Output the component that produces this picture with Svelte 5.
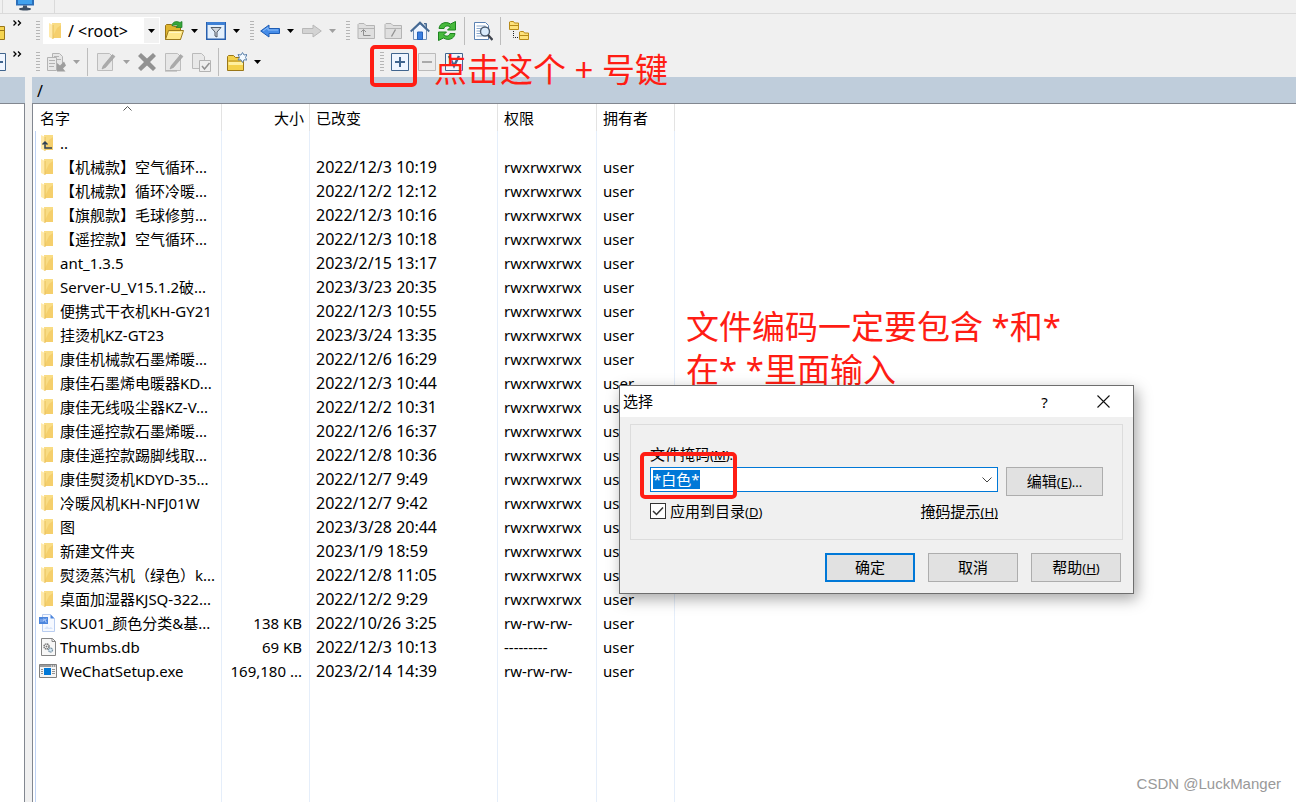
<script>
	let selectAll = $state(true);
	let mask = $state('*白色*');

	const files = [
		{ icon: 'up', name: '..', size: '', date: '', rights: '', owner: '' },
		{ icon: 'folder', name: '【机械款】空气循环...', size: '', date: '2022/12/3 10:19', rights: 'rwxrwxrwx', owner: 'user' },
		{ icon: 'folder', name: '【机械款】循环冷暖...', size: '', date: '2022/12/2 12:12', rights: 'rwxrwxrwx', owner: 'user' },
		{ icon: 'folder', name: '【旗舰款】毛球修剪...', size: '', date: '2022/12/3 10:16', rights: 'rwxrwxrwx', owner: 'user' },
		{ icon: 'folder', name: '【遥控款】空气循环...', size: '', date: '2022/12/3 10:18', rights: 'rwxrwxrwx', owner: 'user' },
		{ icon: 'folder', name: 'ant_1.3.5', size: '', date: '2023/2/15 13:17', rights: 'rwxrwxrwx', owner: 'user' },
		{ icon: 'folder', name: 'Server-U_V15.1.2破...', size: '', date: '2023/3/23 20:35', rights: 'rwxrwxrwx', owner: 'user' },
		{ icon: 'folder', name: '便携式干衣机KH-GY21', size: '', date: '2022/12/3 10:55', rights: 'rwxrwxrwx', owner: 'user' },
		{ icon: 'folder', name: '挂烫机KZ-GT23', size: '', date: '2023/3/24 13:35', rights: 'rwxrwxrwx', owner: 'user' },
		{ icon: 'folder', name: '康佳机械款石墨烯暖...', size: '', date: '2022/12/6 16:29', rights: 'rwxrwxrwx', owner: 'user' },
		{ icon: 'folder', name: '康佳石墨烯电暖器KD...', size: '', date: '2022/12/3 10:44', rights: 'rwxrwxrwx', owner: 'user' },
		{ icon: 'folder', name: '康佳无线吸尘器KZ-V...', size: '', date: '2022/12/2 10:31', rights: 'rwxrwxrwx', owner: 'user' },
		{ icon: 'folder', name: '康佳遥控款石墨烯暖...', size: '', date: '2022/12/6 16:37', rights: 'rwxrwxrwx', owner: 'user' },
		{ icon: 'folder', name: '康佳遥控款踢脚线取...', size: '', date: '2022/12/8 10:36', rights: 'rwxrwxrwx', owner: 'user' },
		{ icon: 'folder', name: '康佳熨烫机KDYD-35...', size: '', date: '2022/12/7 9:49', rights: 'rwxrwxrwx', owner: 'user' },
		{ icon: 'folder', name: '冷暖风机KH-NFJ01W', size: '', date: '2022/12/7 9:42', rights: 'rwxrwxrwx', owner: 'user' },
		{ icon: 'folder', name: '图', size: '', date: '2023/3/28 20:44', rights: 'rwxrwxrwx', owner: 'user' },
		{ icon: 'folder', name: '新建文件夹', size: '', date: '2023/1/9 18:59', rights: 'rwxrwxrwx', owner: 'user' },
		{ icon: 'folder', name: '熨烫蒸汽机（绿色）k...', size: '', date: '2022/12/8 11:05', rights: 'rwxrwxrwx', owner: 'user' },
		{ icon: 'folder', name: '桌面加湿器KJSQ-322...', size: '', date: '2022/12/2 9:29', rights: 'rwxrwxrwx', owner: 'user' },
		{ icon: 'sheet', name: 'SKU01_颜色分类&基...', size: '138 KB', date: '2022/10/26 3:25', rights: 'rw-rw-rw-', owner: 'user' },
		{ icon: 'db', name: 'Thumbs.db', size: '69 KB', date: '2022/12/3 10:13', rights: '---------', owner: 'user' },
		{ icon: 'exe', name: 'WeChatSetup.exe', size: '169,180 ...', date: '2023/2/14 14:39', rights: 'rw-rw-rw-', owner: 'user' }
	];
</script>

{#snippet fileIcon(name)}
	<svg class="file-icon" width="18" height="18" viewBox="0 0 18 18" aria-hidden="true">
		{#if name === 'folder' || name === 'up'}
			<path d="M5 1h9v15H5z" fill="#f9dc84" />
			<path d="M10 6l4-3v13H5z" fill="#f5cf6c" />
			<path d="M2 1l4 2v14l-4-2z" fill="#ffe9a9" />
			<path d="M6 3v14" stroke="#e7bf59" />
			{#if name === 'up'}
				<path d="M6 9v5h7M3.500 10.500L6 8l2.500 2.500" fill="none" stroke="#2f4156" stroke-width="1.500" />
			{/if}
		{:else if name === 'sheet'}
			<path d="M3.500.500h8l4 4v13h-12z" fill="#f6f9ff" stroke="#b9cdf0" />
			<path d="M11.500.500v4h4z" fill="#4c86dd" />
			<path d="M0 3h9v7H0z" fill="#4c86dd" />
			<path d="M2 5v3M4 8V5h1.500v1.500H4M8 5H6.500v3H8" fill="none" stroke="#bcd4ff" stroke-width=".7" />
			<path d="M5 15l3-3 2 2 2-1 2 2z" fill="#d9e5fa" />
		{:else if name === 'db'}
			<path d="M2.500.500h11l3 3v14h-14z" fill="#f7f7f7" stroke="#858585" />
			<path d="M13 .5v3h3.500" fill="none" stroke="#858585" />
			<circle cx="7.500" cy="8.500" r="2.500" fill="#fff" stroke="#777" stroke-width="1.500" stroke-dasharray="1.500 .5" />
			<circle cx="7.500" cy="8.500" r="1" fill="#777" />
			<circle cx="11.500" cy="12" r="2" fill="#d6e8f4" stroke="#7893a4" stroke-width="1.300" stroke-dasharray="1.300 .5" />
		{:else}
			<path d="M.500 2.500h17v13H.500z" fill="#f4f4f4" stroke="#808080" />
			<path d="M1 3h16v2H1z" fill="#9b9b9b" />
			<path d="M12 4h1M14 4h1M16 4h1" stroke="#fff" />
			<path d="M5 6h7v7H5z" fill="#0078d7" />
			<path d="M2 7.500h2M2 9.500h2M2 11.500h2M13 7.500h3M13 9.500h3M13 11.500h3" stroke="#929292" />
		{/if}
	</svg>
{/snippet}

{#snippet tool(name, label, disabled = false)}
	<button class="tool" aria-label={label} {disabled}>
		<svg width="20" height="20" viewBox="0 0 20 20" fill="none" aria-hidden="true">
			{#if name === 'open'}
				<path d="M1.500 18.500V4.500l1-1h5l2 2h7v13z" fill="#e0b52e" stroke="#96741a" />
				<path d="M1.500 18.500l3-9h15l-3 9z" fill="#ffe88a" stroke="#9c7b1f" />
				<path d="M5 11.500h12" stroke="#fff6c5" />
				<path d="M8 5c0-4 4-5.500 8-3.500l2-1v6h-6l2-2c-2-1-4-.5-6 .5z" fill="#37a63a" stroke="#197a24" stroke-width=".7" />
			{:else if name === 'filter'}
				<path d="M.750 1.750h18.500v16.500H.750z" fill="#e4f0fc" stroke="#2860ae" stroke-width="1.500" />
				<path d="M1 1h18v3H1z" fill="#3e80d4" />
				<path d="M5 6.500h10l-4 4.500v5l-2-1v-4z" fill="#d1d6dc" stroke="#505b68" />
			{:else if name === 'back'}
				<path d="M.700 10L9 4v3.500h10.500v5H9V16z" fill="#458ce8" stroke="#1e5cb3" />
				<path d="M3 10l5-3.500V9h10" stroke="#8bbcf8" />
			{:else if name === 'forward'}
				<path d="M19.300 10L11 4v3.500H.500v5H11V16z" fill="#d3d3d3" stroke="#b8b8b8" />
			{:else if name === 'parent' || name === 'root'}
				<path d="M2 17.500V3.500l1-1h5l2 2h8.500v13z" fill="#dfdfdf" stroke="#b4b4b4" />
				<path d="M2.500 7.500h15.500" stroke="#b4b4b4" />
				{#if name === 'parent'}
					<path d="M7.500 9v5.500h7M5 11l2.500-2.500L10 11" stroke="#8f8f8f" />
				{:else}
					<path d="M12.500 8.500l-4 7" stroke="#8f8f8f" stroke-width="1.300" />
				{/if}
			{:else if name === 'home'}
				<path d="M3.500 9v9.500h13V9L10 3z" fill="#eef5ff" stroke="#6f8eb4" />
				<path d="M14 2.500h2.500V7" fill="#7596ba" stroke="#49698f" />
				<path d="M.700 10.500L10 1.500l9.300 9" stroke="#446892" stroke-width="1.800" />
				<path d="M7.500 11h5v7.500h-5z" fill="#3a7ee0" stroke="#2360b8" />
			{:else if name === 'refresh'}
				<path d="M2 7.500C2.500 2 9 0 13.500 3L18.500.500v8.500h-8l3-3C10 4 8 5 7 7.500z" fill="#48ba3d" stroke="#1e8420" />
				<path d="M18 12.500c-.5 5.500-7 7.500-11.500 4.500l-5 2.500V11h8l-3 3c3.500 2 5.500 1 6.500-1.500z" fill="#48ba3d" stroke="#1e8420" />
			{:else if name === 'find'}
				<path d="M1.500 1.500h11l3 3v14h-14z" fill="#fff" stroke="#5b82b3" />
				<path d="M3.500 5h9M3.500 7.500h9M3.500 10h5M3.500 12.500h4M3.500 15h6" stroke="#8ba9cd" />
				<circle cx="12" cy="10.500" r="4.500" fill="#d9ebfc" stroke="#4b5c70" stroke-width="1.400" />
				<path d="M15 14l4.500 5" stroke="#40454e" stroke-width="2.400" />
			{:else if name === 'tree'}
				<path d="M.500 8.500V1l1-.5h3l1 1.500h4v6.500zM10.500 18.500V11l1-.5h3l1 1.500h4v6.500z" fill="#ffe27a" stroke="#b88b19" />
				<path d="M1 4.500h8.500M11 14.500h8.500" stroke="#b88b19" />
				<path d="M4.500 10v6.500H10" stroke="#222" stroke-dasharray="1 1" />
			{:else if name === 'copy'}
				<path d="M6.500 1.500h7l3 3v12h-10z" fill="#e6e6e6" stroke="#b3b3b3" />
				<path d="M1.500 5.500h9v13h-9z" fill="#e9e9e9" stroke="#b3b3b3" />
				<path d="M8 4.500h5M11 7.500h4M3 8.500h6M3 11.500h6M3 14.500h5" stroke="#b3b3b3" />
				<path d="M18 9.500l-4 4-3-2.500v8.500h8.500l-2.500-3 3-3z" fill="#9e9e9e" />
			{:else if name === 'edit' || name === 'rename'}
				<path d="M1.500 1.500h12l3 3v14h-15z" fill="#e7e7e7" stroke="#bdbdbd" />
				<path d="M7 14L16.500 2.500l2.500 2L9.500 15.500 6 17z" fill="#aaa" stroke="#999" stroke-width=".5" />
				{#if name === 'rename'}
					<path d="M1 19h12" stroke="#aaa" />
				{/if}
			{:else if name === 'delete'}
				<path d="M4 1l6 5.500L16 1l3 3-6 6 6 6-3 3-6-5.500L4 19l-3-3 6-6-6-6z" fill="#929292" />
			{:else if name === 'properties'}
				<path d="M1.500 1.500h9l3 3v12h-12z" fill="#e8e8e8" stroke="#bababa" />
				<path d="M8.500 8.500h11v11h-11z" fill="#eee" stroke="#b3b3b3" />
				<path d="M11 14l2.500 3 5-6" stroke="#919191" stroke-width="1.500" />
			{:else if name === 'new'}
				<path d="M.500 18.500V4.500l1-1h5l2 2h8v13z" fill="#f4d14b" stroke="#9a7718" />
				<path d="M1.500 9h14.500" stroke="#b18c25" />
				<path d="M1.500 10h14.500v3h-14.500z" fill="#fff0a0" />
				<path d="M15.500.500l1.500 2.500 3-.5-1.500 3 1.500 2.500-3-.2-1.500 2.700L14 7.800l-3 .2 1.500-2.500-1.500-3 3 .5z" fill="#f4faff" stroke="#5d82ac" />
			{:else}
				<path d="M1.500 1.500h17v17h-17z" fill={disabled ? '#ececec' : '#f0f6ff'} stroke={disabled ? '#bbb' : '#41658e'} />
				{#if name === 'plus'}
					<path d="M10 5v10M5 10h10" stroke="#41658e" stroke-width="2" />
				{:else if name === 'minus'}
					<path d="M5 10h10" stroke="#aaa" stroke-width="2" />
				{:else}
					<path d="M5 4l5 10 5-10" stroke="#41658e" stroke-width="2.500" />
				{/if}
			{/if}
		</svg>
	</button>
{/snippet}

{#snippet caret(label, disabled = false)}
	<button class="caret" aria-label={label} {disabled}>
		<svg width="7" height="4" viewBox="0 0 7 4" aria-hidden="true"><path d="M0 0h7L3.500 4z" fill="currentColor" /></svg>
	</button>
{/snippet}

<div class="window">
	<div class="tabs">
		<div class="tab">
			<svg width="20" height="11" viewBox="0 0 20 11" aria-hidden="true">
				<path d="M1 0h18v5.500H1z" fill="#2c6fb9" />
				<path d="M3 0h14v4H3z" fill="#42a2ee" />
				<path d="M8 5.500h4V8H8z" fill="#42546b" />
				<path d="M4 9c0-2 12-2 12 0s-12 2-12 0z" fill="#3c4e63" />
			</svg>
		</div>
	</div>

	<div class="toolbar first">
		<div class="stub">
			<svg width="6" height="20" viewBox="0 0 6 20" aria-hidden="true">
				<path d="M0 5.500h4.500v13H0" fill="#f5d451" stroke="#9a7718" />
				<path d="M0 9.500h4" stroke="#9a7718" />
			</svg>
			<button class="more" aria-label="更多"><svg width="9" height="6" viewBox="0 0 9 6" aria-hidden="true"><path d="M.500.500L3 3 .500 5.500M5 .5L7.500 3 5 5.500" fill="none" stroke="#000" stroke-width="1.300" /></svg></button>
		</div>
		<span class="grip"></span>
		<div class="path-box">
			{@render fileIcon('folder')}
			<select aria-label="目录">
				<option>/ &lt;root&gt;</option>
			</select>
			<svg class="path-caret" width="7" height="4" viewBox="0 0 7 4" aria-hidden="true"><path d="M0 0h7L3.500 4z" /></svg>
		</div>
		{@render tool('open', '打开目录')}
		{@render caret('打开目录选项')}
		{@render tool('filter', '过滤')}
		{@render caret('过滤选项')}
		<span class="grip"></span>
		{@render tool('back', '后退')}
		{@render caret('后退历史')}
		{@render tool('forward', '前进', true)}
		{@render caret('前进历史', true)}
		<span class="grip"></span>
		{@render tool('parent', '上级目录', true)}
		{@render tool('root', '根目录', true)}
		{@render tool('home', '主目录')}
		{@render tool('refresh', '刷新')}
		<span class="divider"></span>
		{@render tool('find', '查找文件')}
		<span class="divider"></span>
		{@render tool('tree', '目录树')}
	</div>

	<div class="toolbar second">
		<div class="stub">
			<svg width="6" height="20" viewBox="0 0 6 20" aria-hidden="true">
				<path d="M0 1.500h5.500v17H0" fill="#f0f6ff" stroke="#41658e" />
				<path d="M0 10h3" stroke="#41658e" stroke-width="2" />
			</svg>
			<button class="more" aria-label="更多"><svg width="9" height="6" viewBox="0 0 9 6" aria-hidden="true"><path d="M.500.500L3 3 .500 5.500M5 .5L7.500 3 5 5.500" fill="none" stroke="#000" stroke-width="1.300" /></svg></button>
		</div>
		<span class="grip"></span>
		{@render tool('copy', '下载', true)}
		{@render caret('下载选项', true)}
		<span class="divider"></span>
		{@render tool('edit', '编辑', true)}
		{@render caret('编辑选项', true)}
		{@render tool('delete', '删除', true)}
		{@render tool('rename', '重命名', true)}
		{@render tool('properties', '属性', true)}
		<span class="divider"></span>
		{@render tool('new', '新建')}
		{@render caret('新建选项')}
		<div class="selection-tools">
			<span class="grip"></span>
			{@render tool('plus', '选择文件')}
			{@render tool('minus', '取消选择', true)}
			{@render tool('invert', '反向选择')}
		</div>
	</div>

	<main class="panes">
		<section class="pane local">
			<div class="path"></div>
			<div class="listing"></div>
		</section>
		<section class="pane remote">
			<div class="path">/</div>
			<div class="listing">
				<table>
					<colgroup>
						<col class="c-name" />
						<col class="c-size" />
						<col class="c-date" />
						<col class="c-rights" />
						<col class="c-owner" />
						<col />
					</colgroup>
					<thead>
						<tr>
							<th>
								名字
								<svg class="sort" width="9" height="5" viewBox="0 0 9 5" aria-hidden="true"><path d="M.500 4.500l4-4 4 4" fill="none" stroke="#555" /></svg>
							</th>
							<th class="size">大小</th>
							<th>已改变</th>
							<th>权限</th>
							<th>拥有者</th>
							<td></td>
						</tr>
					</thead>
					<tbody>
						{#each files as file}
							<tr>
								<td class="name"><div>{@render fileIcon(file.icon)}<span>{file.name}</span></div></td>
								<td class="size">{file.size}</td>
								<td class="date">{file.date}</td>
								<td>{file.rights}</td>
								<td>{file.owner}</td>
								<td></td>
							</tr>
						{/each}
						<tr class="rest" aria-hidden="true">
							<td class="name"></td><td></td><td></td><td></td><td></td><td></td>
						</tr>
					</tbody>
				</table>
			</div>
		</section>
	</main>

	<p class="note note-plus">点击这个 + 号键</p>
	<p class="note note-mask">文件编码一定要包含 *和*<br />在* *里面输入</p>

	<div class="dialog" role="dialog" aria-labelledby="dialog-title">
		<header>
			<h1 id="dialog-title">选择</h1>
			<button class="help" aria-label="帮助">?</button>
			<button class="close" aria-label="关闭">
				<svg width="13" height="13" viewBox="0 0 13 13" aria-hidden="true"><path d="M.500.500l12 12M12.500.500l-12 12" stroke="#111" stroke-width="1.100" /></svg>
			</button>
		</header>
		<div class="group">
			<label for="mask">文件掩码<small>(<u>M</u>):</small></label>
			<div class="mask-row">
				<div class="combo">
					<span class="field">
						<input id="mask" bind:value={mask} />
					</span>
					<svg width="10" height="6" viewBox="0 0 10 6" aria-hidden="true"><path d="M.500.500L5 5 9.500.500" fill="none" stroke="#444" /></svg>
				</div>
				<button class="btn edit">编辑<small>(<u>E</u>)...</small></button>
			</div>
			<div class="options">
				<label class="check">
					<input type="checkbox" bind:checked={selectAll} />
					<span>应用到目录<small>(<u>D</u>)</small></span>
				</label>
				<a href="#mask">掩码提示<small>(<u>H</u>)</small></a>
			</div>
		</div>
		<footer>
			<button class="btn primary">确定</button>
			<button class="btn">取消</button>
			<button class="btn">帮助<small>(<u>H</u>)</small></button>
		</footer>
	</div>

	<span class="marker marker-plus"></span>
	<span class="marker marker-mask"></span>
	<span class="watermark">CSDN @LuckManger</span>
</div>

<style>
	:global(body) {
		margin: 0;
	}

	.window {
		position: relative;
		display: flex;
		flex-direction: column;
		min-height: 100vh;
		overflow: hidden;
		background: #f0f0f0;
		color: #000;
		font-family: 'Noto Sans', 'Noto Sans CJK SC', sans-serif;
		font-size: 15px;
	}

	button,
	input,
	select {
		font: inherit;
		color: inherit;
	}

	button {
		padding: 0;
		border: 0;
		background: none;
	}

	.tabs {
		height: 13px;
		border-bottom: 1px solid #dadada;
	}

	.tab {
		width: 53px;
		height: 13px;
		margin-left: 2px;
		padding-left: 12px;
		box-sizing: border-box;
		border: solid #dadada;
		border-width: 0 1px;
	}

	.tab svg {
		display: block;
	}

	.toolbar {
		display: flex;
		align-items: center;
	}

	.first {
		height: 33px;
	}

	.second {
		height: 30px;
	}

	.stub {
		display: flex;
		align-items: center;
		gap: 7px;
		width: 30px;
	}

	.more {
		height: 22px;
		display: flex;
	}

	.grip {
		width: 4px;
		height: 20px;
		margin: 0 2px 0 6px;
		background: repeating-linear-gradient(#b5b5b5 0 1px, transparent 1px 3px);
	}

	.tool {
		display: flex;
		justify-content: center;
		width: 27px;
	}

	.caret {
		display: flex;
		align-items: center;
		justify-content: center;
		width: 15px;
		height: 24px;
	}

	.second .caret {
		width: 14px;
	}

	.caret:disabled {
		color: #a0a0a0;
	}

	.divider {
		width: 1px;
		height: 28px;
		margin: 0 4px;
		background: #bdbdbd;
	}

	.path-box {
		display: flex;
		align-items: center;
		position: relative;
		width: 117px;
		height: 27px;
		margin-left: 1px;
		padding-left: 4px;
		box-sizing: border-box;
		background: linear-gradient(#f2f2f2, #f2f2f2) right 1px center / 15px 25px no-repeat #fff;
	}

	.path-box select {
		flex: 1;
		min-width: 0;
		padding: 0 0 0 3px;
		border: 0;
		appearance: none;
		background: none;
		font-size: 16px;
	}

	.path-caret {
		position: absolute;
		right: 5px;
	}

	.selection-tools {
		display: flex;
		align-items: center;
		margin-left: 110px;
	}

	.panes {
		flex: 1;
		display: flex;
		gap: 7px;
	}

	.pane {
		display: flex;
		flex-direction: column;
	}

	.local {
		width: 25px;
	}

	.remote {
		flex: 1;
	}

	.path {
		height: 26px;
		padding-left: 5px;
		line-height: 28px;
		font-size: 16px;
		background: #bfcddb;
	}

	.listing {
		flex: 1;
		display: grid;
		border-top: 1px solid #828790;
		background: #fff;
	}

	.local .listing {
		border-right: 1px solid #828790;
	}

	.remote .listing {
		padding-left: 2px;
		border-left: 1px solid #828790;
	}

	table {
		width: 100%;
		table-layout: fixed;
		border-collapse: separate;
		border-spacing: 0;
	}

	.c-name {
		width: 187px;
	}

	.c-size {
		width: 88px;
	}

	.c-date {
		width: 188px;
	}

	.c-rights {
		width: 99px;
	}

	.c-owner {
		width: 78px;
	}

	th,
	td {
		height: 24px;
		padding: 0 0 0 6px;
		box-sizing: border-box;
		border-right: 1px solid #e5eefa;
		line-height: 22px;
		font-weight: normal;
		text-align: left;
		white-space: nowrap;
	}

	th {
		position: relative;
		height: 27px;
		border-right-color: #e3e3e3;
	}

	th:first-child {
		padding-left: 5px;
	}

	td:last-child {
		border-right: 0;
	}

	.date {
		font-size: 16px;
	}

	.rest td {
		height: auto;
	}

	.sort {
		position: absolute;
		left: 50%;
		top: 2px;
		margin-left: -5px;
	}

	.name {
		padding-left: 3px;
		border-left: 1px solid #bfd3f5;
	}

	.name div {
		display: flex;
		align-items: center;
		gap: 3px;
	}

	.file-icon {
		flex: none;
	}

	.size {
		padding: 0 7px 0 0;
		text-align: right;
	}

	th.size {
		padding-right: 5px;
	}

	.note {
		position: absolute;
		margin: 0;
		color: #ff1d14;
		font-size: 33px;
		line-height: 43px;
		white-space: nowrap;
	}

	.note-plus {
		left: 434px;
		top: 48px;
	}

	.note-mask {
		left: 686px;
		top: 305px;
	}

	.marker {
		position: absolute;
		box-sizing: border-box;
		border: 4px solid #ff1d14;
		border-radius: 5px;
		pointer-events: none;
	}

	.marker-plus {
		left: 370px;
		top: 45px;
		width: 47px;
		height: 42px;
	}

	.marker-mask {
		left: 640px;
		top: 452px;
		width: 97px;
		height: 47px;
	}

	.dialog {
		position: absolute;
		left: 619px;
		top: 385px;
		width: 515px;
		box-sizing: border-box;
		border: 1px solid #6e6e6e;
		background: #f0f0f0;
		box-shadow: 3px 5px 14px rgba(0, 0, 0, 0.35);
		line-height: 20px;
	}

	.dialog header {
		display: flex;
		align-items: center;
		height: 31px;
		padding-left: 3px;
		background: #fff;
	}

	.dialog h1 {
		flex: 1;
		margin: 0;
		padding-bottom: 2px;
		font-size: 15px;
		font-weight: normal;
	}

	.dialog small {
		font-size: 13px;
		line-height: 1;
	}

	.help,
	.close {
		display: flex;
		align-items: center;
		justify-content: center;
		width: 57px;
		height: 28px;
	}

	.close {
		width: 60px;
	}

	.group {
		margin: 7px 10px 0;
		padding: 19px 19px 18px;
		border: 1px solid #dcdcdc;
	}

	.group > label {
		display: block;
		height: 20px;
	}

	.mask-row {
		display: flex;
		align-items: flex-start;
		gap: 8px;
		margin-top: 3px;
	}

	.combo {
		flex: 1;
		display: flex;
		align-items: center;
		height: 25px;
		padding: 0 5px 0 2px;
		box-sizing: border-box;
		border: 1px solid #0078d7;
		background: #fff;
	}

	.field {
		flex: 1;
		display: flex;
	}

	.combo input {
		width: 47px;
		height: 17px;
		padding: 0 0 2px;
		border: 0;
		outline: 0;
		background: #0078d7;
		color: #fff;
		line-height: 16px;
	}

	.btn {
		width: 90px;
		height: 29px;
		padding-bottom: 2px;
		border: 1px solid #adadad;
		background: #e1e1e1;
		line-height: 20px;
	}

	.edit {
		width: 97px;
	}

	.primary {
		border: 2px solid #0078d7;
	}

	.options {
		display: flex;
		justify-content: space-between;
		height: 20px;
		margin-top: 5px;
		padding-right: 105px;
	}

	.check {
		display: flex;
		align-items: center;
		gap: 4px;
	}

	.check input {
		appearance: none;
		width: 16px;
		height: 16px;
		margin: 0;
		box-sizing: border-box;
		border: 1px solid #333;
		background: #fff;
	}

	.check input:checked {
		background: url("data:image/svg+xml,%3Csvg xmlns='http://www.w3.org/2000/svg' viewBox='0 0 14 14'%3E%3Cpath d='M2 7l3.500 3.500L12 3.500' fill='none' stroke='%23333' stroke-width='1.500'/%3E%3C/svg%3E") center / 14px no-repeat #fff;
	}

	.options a {
		height: 17px;
		border-bottom: 1px dashed #000;
		color: inherit;
		line-height: 20px;
		text-decoration: none;
	}

	.dialog footer {
		display: flex;
		justify-content: flex-end;
		gap: 13px;
		padding: 13px 12px 11px;
	}

	.watermark {
		position: absolute;
		right: 15px;
		bottom: 8px;
		color: #999;
		font-family: 'Liberation Sans', sans-serif;
		font-size: 15px;
		line-height: 20px;
	}
</style>
